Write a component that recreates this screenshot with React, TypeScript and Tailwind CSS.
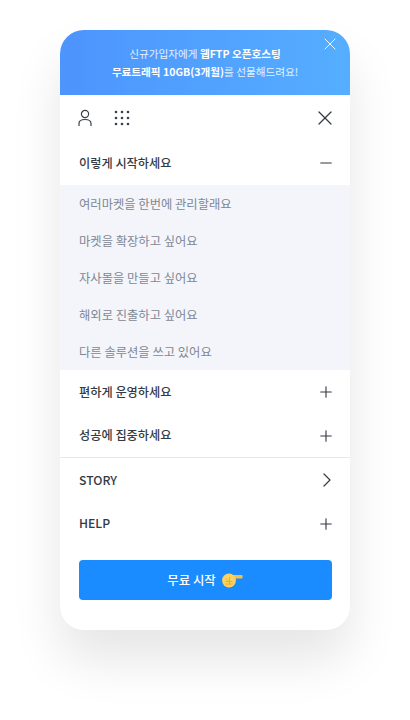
import { Plus, Minus, X, ChevronRight } from "lucide-react";

const subItems = [
  "여러마켓을 한번에 관리할래요",
  "마켓을 확장하고 싶어요",
  "자사몰을 만들고 싶어요",
  "해외로 진출하고 싶어요",
  "다른 솔루션을 쓰고 있어요",
];

function MenuRow({ label, icon, short }: { label: string; icon: React.ReactNode; short?: boolean }) {
  return (
    <div className={`${short ? "h-[43px]" : "h-[44px]"} flex items-center justify-between pl-[19px] pr-[15px]`}>
      <span className="text-[12.2px] font-medium text-[#333a44]">{label}</span>
      {icon}
    </div>
  );
}

function GridIcon() {
  const dots = [2, 8, 14];
  return (
    <svg width="16" height="16" viewBox="0 0 16 16" fill="#3a3f47">
      {dots.map((y) => dots.map((x) => <circle key={`${x}-${y}`} cx={x} cy={y} r="1.3" />))}
    </svg>
  );
}

function UserIcon() {
  return (
    <svg width="14" height="18" viewBox="0 0 14 18" fill="none" stroke="#3a3f47" strokeWidth="1.2">
      <circle cx="7" cy="5" r="3.6" />
      <path d="M1 17v-2.5C1 12 3 10.5 7 10.5s6 1.5 6 4V17" />
    </svg>
  );
}

function PointingHand() {
  return (
    <svg width="21" height="15" viewBox="0 0 21 15">
      <path d="M9 2h11c.8 0 .8 3 0 3.4H12z" fill="#f5c04a" />
      <circle cx="7" cy="7.5" r="6.9" fill="#fbd25c" />
      <path d="M3.5 8.5h7M3.5 11h7M7.5 4v8M4 5.5l3 3" stroke="#e3a93a" strokeWidth="0.9" fill="none" />
    </svg>
  );
}

export default function App() {
  return (
    <div
      className="h-[720px] bg-white pt-[30px] overflow-hidden"
      style={{ fontFamily: '"Noto Sans CJK KR", "Noto Sans", sans-serif' }}
    >
      <div className="w-[290px] h-[600px] ml-[60px] bg-white rounded-[24px] overflow-hidden shadow-[0_30px_50px_rgba(0,0,0,0.1)]">
        <div className="relative h-[65px] bg-gradient-to-r from-[#4d94fd] to-[#55aeff] flex flex-col items-center justify-center text-[10.6px] leading-[18px] text-white/85 pt-[1px]">
          <p>
            신규가입자에게 <b className="font-bold text-white">웹FTP 오픈호스팅</b>
          </p>
          <p>
            <b className="font-bold text-white">무료트래픽 10GB(3개월)</b>를 선물해드려요!
          </p>
          <X size={20} strokeWidth={1.2} className="absolute top-[4px] right-[10px] text-white/90" />
        </div>

        <div className="h-[46px] flex items-center pl-[18px] pr-[13px]">
          <UserIcon />
          <div className="ml-[22px]">
            <GridIcon />
          </div>
          <X size={24} strokeWidth={1.2} className="ml-auto text-[#333a44]" />
        </div>

        <MenuRow label="이렇게 시작하세요" icon={<Minus size={18} strokeWidth={1.5} className="text-[#333a44]" />} />

        <div className="h-[185px] bg-[#f3f5fa] flex flex-col">
          {subItems.map((item) => (
            <div key={item} className="h-[37px] flex items-center pl-[19px] pt-[1px] text-[12.3px] text-[#7f8794]">
              {item}
            </div>
          ))}
        </div>

        <MenuRow label="편하게 운영하세요" icon={<Plus size={18} strokeWidth={1.5} className="text-[#333a44]" />} />
        <div className="border-b border-[#e8e8e8]">
          <MenuRow short label="성공에 집중하세요" icon={<Plus size={18} strokeWidth={1.5} className="text-[#333a44]" />} />
        </div>
        <MenuRow label="STORY" icon={<ChevronRight size={24} strokeWidth={1.2} className="text-[#333a44] -mr-[4px]" />} />
        <MenuRow short label="HELP" icon={<Plus size={18} strokeWidth={1.5} className="text-[#333a44]" />} />

        <div className="px-[18.5px] pt-[15px]">
          <button className="w-full h-[40px] rounded-[4px] bg-[#1a8cff] text-white text-[12.4px] font-medium flex items-center justify-center gap-[6px]">
            무료 시작
            <PointingHand />
          </button>
        </div>
      </div>
    </div>
  );
}
